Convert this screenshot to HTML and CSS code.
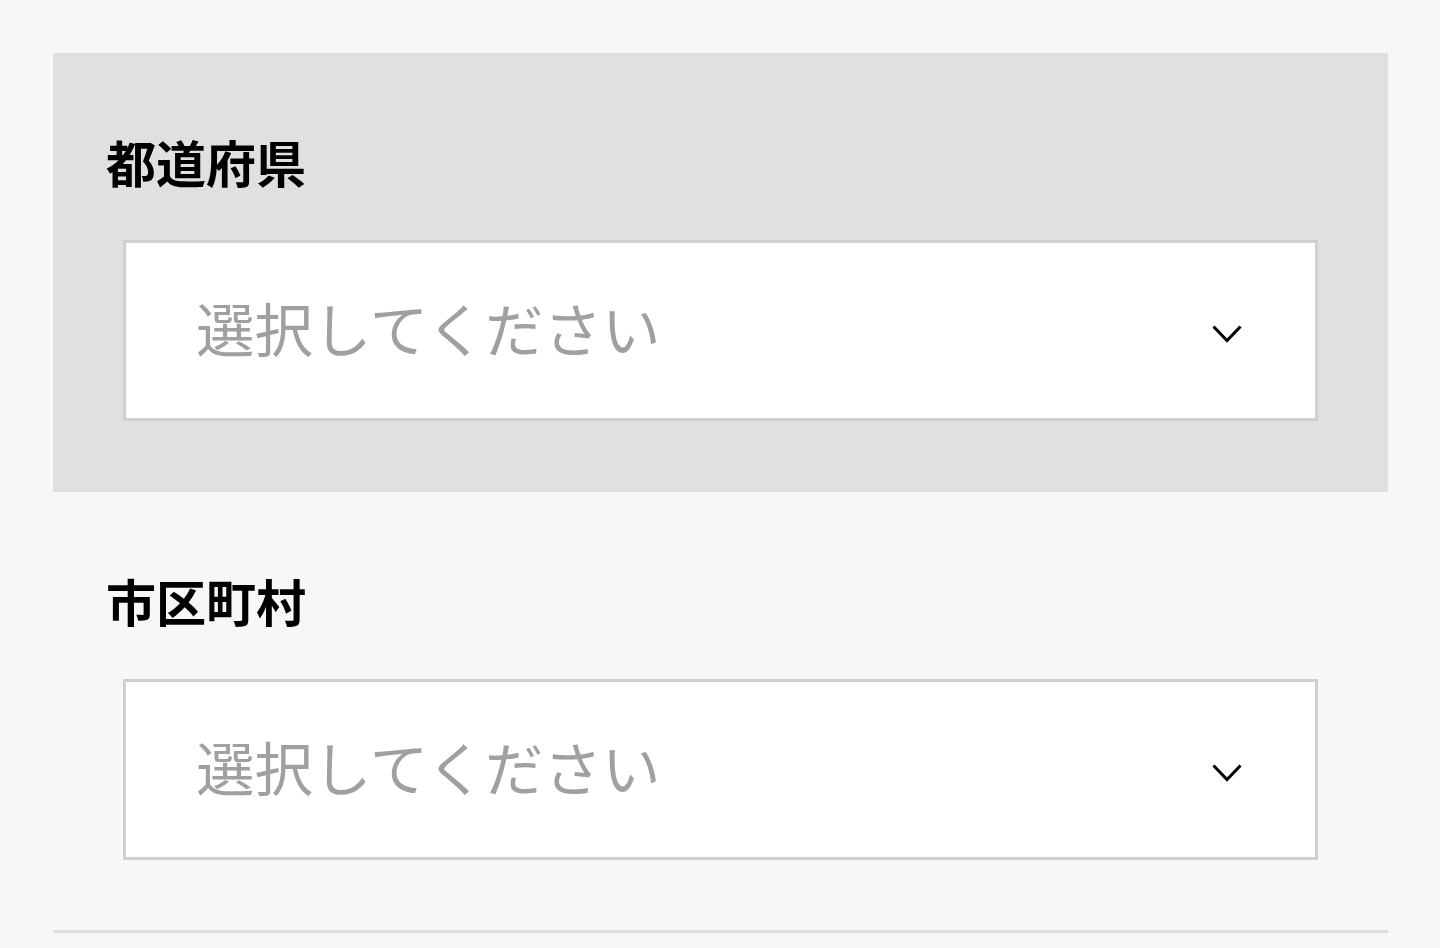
FILE: index.html
```html
<!DOCTYPE html>
<html lang="ja">
<head>
  <meta charset="UTF-8">
  <title>住所選択</title>
  <link rel="stylesheet" href="styles.css">
</head>
<body>
  <div class="form">
    <!-- 都道府県 -->
    <div class="field active">
      <div class="field-label">都道府県</div>
      <div class="select">
        <span class="placeholder">選択してください</span>
        <svg class="chevron" width="30" height="18" viewBox="0 0 30 18">
          <polyline points="1.5,1.5 15,15.5 28.5,1.5" fill="none" stroke="#000" stroke-width="3"/>
        </svg>
      </div>
    </div>

    <!-- 市区町村 -->
    <div class="field">
      <div class="field-label">市区町村</div>
      <div class="select">
        <span class="placeholder">選択してください</span>
        <svg class="chevron" width="30" height="18" viewBox="0 0 30 18">
          <polyline points="1.5,1.5 15,15.5 28.5,1.5" fill="none" stroke="#000" stroke-width="3"/>
        </svg>
      </div>
    </div>
  </div>
</body>
</html>
```

FILE: styles.css
```css
body {
  margin: 0;
  background-color: #f7f7f7;
  font-family: "Noto Sans CJK JP", "Noto Sans", sans-serif;
  color: #000;
}

.form {
  padding: 53px 52px 0 53px;
}

.field {
  display: flex;
  flex-direction: column;
  padding: 83px 70px 68px 53px;
  border-bottom: 3px solid #dedede;
}

.field + .field {
  padding-bottom: 70px;
}

.field.active {
  background-color: #e0e0e0;
  border-bottom-color: #e0e0e0;
}

.field-label {
  font-size: 50px;
  font-weight: bold;
  line-height: 50px;
  margin-bottom: 54px;
}

.select {
  display: flex;
  align-items: center;
  justify-content: space-between;
  box-sizing: border-box;
  height: 181px;
  margin-left: 17px;
  padding: 0 73px 0 70px;
  background-color: #fff;
  border: 3px solid #d0d0d0;
}

.placeholder {
  font-size: 58.5px;
  color: #a0a0a0;
  line-height: 1;
  margin-bottom: 6px;
}

.chevron {
  margin-top: 7px;
}
```
